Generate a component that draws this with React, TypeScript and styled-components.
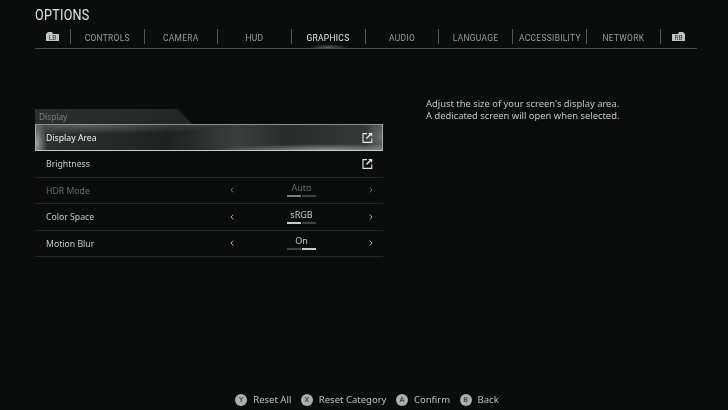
import { FC } from "react";
import styled, { createGlobalStyle } from "styled-components";

const GlobalStyle = createGlobalStyle`
  html, body {
    margin: 0;
    padding: 0;
    background: #0b0c0c;
  }
`;

const Screen = styled.div`
  width: 728px;
  height: 410px;
  box-sizing: border-box;
  padding: 7px 31px 0 35px;
  display: flex;
  flex-direction: column;
  background: #0b0c0c;
  overflow: hidden;
  font-family: "Noto Sans", sans-serif;
  filter: blur(0.3px);
`;
const Title = styled.div`
  height: 16px;
  line-height: 16px;
  font-family: "Roboto", sans-serif;
  font-size: 14px;
  letter-spacing: 0.3px;
  color: #e4e6e6;
  transform: scaleX(0.9);
  transform-origin: left center;
`;
const TabBar = styled.div`
  display: flex;
  height: 19px;
  margin-top: 6px;
  align-items: flex-start;
  border-bottom: 1px solid #4c4e4e;
`;
const BumperCell = styled.div`
  width: 35px;
  height: 15px;
  display: flex;
  align-items: center;
  justify-content: center;
  box-sizing: border-box;
`;
const Tab = styled.div<{ $active?: boolean }>`
  position: relative;
  width: 73.7px;
  height: 15px;
  line-height: 13px;
  flex: none;
  box-sizing: border-box;
  border-left: 1px solid #565858;
  text-align: center;
  color: ${(p) => (p.$active ? "#e6e8e8" : "#9a9d9d")};
  &::after {
    content: "";
    display: ${(p) => (p.$active ? "block" : "none")};
    position: absolute;
    left: 16px;
    right: 16px;
    bottom: -4px;
    height: 4px;
    background: radial-gradient(ellipse at 50% 100%, rgba(190, 200, 200, 0.45), transparent 70%);
  }
`;
const TabLabel = styled.span`
  display: inline-block;
  font-family: "Roboto", sans-serif;
  font-size: 9.8px;
  letter-spacing: 0.35px;
  white-space: nowrap;
  transform: scaleX(0.86);
`;
const EndCell = styled(BumperCell)`
  border-left: 1px solid #565858;
  width: 36px;
`;
const Content = styled.div`
  display: flex;
  margin-top: 60px;
`;
const Panel = styled.div`
  width: 348px;
  flex: none;
`;
const SectionTab = styled.div`
  width: 157px;
  height: 15px;
  line-height: 15px;
  box-sizing: border-box;
  padding-left: 4px;
  font-size: 8.3px;
  color: #7c7f7f;
  background: linear-gradient(90deg, #2d3030, #232525);
  clip-path: polygon(0 0, 143px 0, 100% 100%, 0 100%);
`;
const Row = styled.div<{ $dim?: boolean }>`
  height: 26.5px;
  box-sizing: border-box;
  display: flex;
  align-items: center;
  padding: 0 10px 0 11px;
  font-size: 8.7px;
  border-bottom: 1px solid #222626;
  color: ${(p) => (p.$dim ? "#6a6d6d" : "#c6c9c9")};
`;
const SelectedRow = styled(Row)`
  height: 27px;
  color: #f2f4f4;
  border: 1px solid #a9acac;
  border-top-color: #8d9090;
  border-bottom-color: #c8cbcb;
  padding-left: 10px;
  padding-right: 9px;
  background:
    radial-gradient(ellipse 115px 6px at 84% 100%, rgba(205, 210, 210, 0.6), transparent),
    radial-gradient(ellipse 140px 9px at 14% 0%, rgba(130, 135, 135, 0.55), transparent),
    radial-gradient(ellipse 11px 24px at 0% 70%, rgba(200, 205, 205, 0.75), transparent),
    radial-gradient(ellipse 18px 26px at 100% 45%, rgba(140, 145, 145, 0.6), transparent),
    linear-gradient(90deg, #303232, #1f2121 38%, #3c3e3e 58%, #2a2c2c 72%, #383a3a);
`;
const RowLabel = styled.span`
  flex: 1;
  padding-top: 1px;
`;
const Selector = styled.div`
  width: 143px;
  display: flex;
  align-items: center;
  justify-content: space-between;
`;
const ValueBox = styled.div`
  width: 30px;
  display: flex;
  flex-direction: column;
  align-items: center;
  gap: 1px;
  margin-top: -2px;
`;
const ValueText = styled.span`
  line-height: 13px;
  font-size: 9px;
`;
const Pips = styled.div`
  display: flex;
  gap: 1px;
`;
const Pip = styled.span<{ $on: boolean; $dim?: boolean }>`
  width: 14px;
  height: 2px;
  background: ${(p) => (p.$on ? (p.$dim ? "#7c7f7f" : "#c8cbcb") : "#414444")};
`;
const Help = styled.div`
  margin-left: 43px;
  margin-top: -11px;
  font-size: 9.4px;
  line-height: 12px;
  color: #c2c5c5;
`;
const Footer = styled.div`
  margin-top: auto;
  height: 21px;
  display: flex;
  align-items: center;
  justify-content: center;
  gap: 9.5px;
  padding-left: 2px;
  font-size: 9.5px;
  color: #bdc0c0;
`;
const Hint = styled.div`
  display: flex;
  align-items: center;
  gap: 6px;
`;
const PadButton = styled.span`
  width: 12px;
  height: 12px;
  border-radius: 50%;
  background: #acafaf;
  color: #4a4d4d;
  display: flex;
  align-items: center;
  justify-content: center;
  font-size: 7px;
  font-weight: 700;
`;

const ExternalIcon: FC = () => (
  <svg width="11" height="11" viewBox="0 0 11 11" fill="none" stroke="#e6e8e8" strokeWidth="1.1">
    <path d="M5 1.6H1v8.8h8.8V6.4" />
    <path d="M4.4 6.6 9 2" strokeWidth="1.4" />
    <path d="M6.2 1.1h4v3.6z" fill="#e6e8e8" stroke="none" />
  </svg>
);

const Chevron: FC<{ dir: "left" | "right"; dim?: boolean }> = ({ dir, dim }) => (
  <svg width="4" height="6" viewBox="0 0 4 6" fill="none" stroke={dim ? "#6a6d6d" : "#b0b3b3"} strokeWidth="1">
    <path d={dir === "left" ? "M3.2.6 1 3l2.2 2.4" : "M.8.6 3 3 .8 5.4"} />
  </svg>
);

const Bumper: FC<{ label: string; flip?: boolean }> = ({ label, flip }) => (
  <svg width="13" height="9" viewBox="0 0 13 9">
    <path
      d={flip ? "M0 2h6l1-2h4l2 2v7H0z" : "M13 2H7L6 0H2L0 2v7h13z"}
      fill="#c2c5c5"
    />
    <text x="6.5" y="7.6" textAnchor="middle" fontSize="6.5" fontFamily="Roboto, sans-serif" fill="#33363a">
      {label}
    </text>
  </svg>
);

const tabs = ["CONTROLS", "CAMERA", "HUD", "GRAPHICS", "AUDIO", "LANGUAGE", "ACCESSIBILITY", "NETWORK"];

const options = [
  { label: "HDR Mode", value: "Auto", step: 0, dim: true },
  { label: "Color Space", value: "sRGB", step: 0 },
  { label: "Motion Blur", value: "On", step: 1 },
];

const hints = [
  { button: "Y", label: "Reset All" },
  { button: "X", label: "Reset Category" },
  { button: "A", label: "Confirm" },
  { button: "B", label: "Back" },
];

export default function App() {
  return (
    <Screen>
      <GlobalStyle />
      <Title>OPTIONS</Title>
      <TabBar>
        <BumperCell>
          <Bumper label="LB" />
        </BumperCell>
        {tabs.map((tab) => (
          <Tab key={tab} $active={tab === "GRAPHICS"}>
            <TabLabel>{tab}</TabLabel>
          </Tab>
        ))}
        <EndCell>
          <Bumper label="RB" flip />
        </EndCell>
      </TabBar>
      <Content>
        <Panel>
          <SectionTab>Display</SectionTab>
          <SelectedRow>
            <RowLabel>Display Area</RowLabel>
            <ExternalIcon />
          </SelectedRow>
          <Row>
            <RowLabel>Brightness</RowLabel>
            <ExternalIcon />
          </Row>
          {options.map((option) => (
            <Row key={option.label} $dim={option.dim}>
              <RowLabel>{option.label}</RowLabel>
              <Selector>
                <Chevron dir="left" dim={option.dim} />
                <ValueBox>
                  <ValueText>{option.value}</ValueText>
                  <Pips>
                    <Pip $on={option.step === 0} $dim={option.dim} />
                    <Pip $on={option.step === 1} $dim={option.dim} />
                  </Pips>
                </ValueBox>
                <Chevron dir="right" dim={option.dim} />
              </Selector>
            </Row>
          ))}
        </Panel>
        <Help>
          Adjust the size of your screen's display area.
          <br />
          A dedicated screen will open when selected.
        </Help>
      </Content>
      <Footer>
        {hints.map((hint) => (
          <Hint key={hint.button}>
            <PadButton>{hint.button}</PadButton>
            {hint.label}
          </Hint>
        ))}
      </Footer>
    </Screen>
  );
}
